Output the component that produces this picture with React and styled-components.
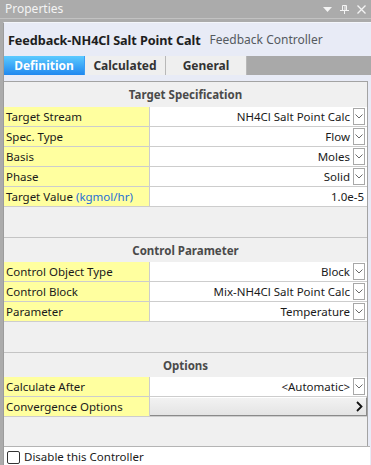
import React from "react";
import styled, { createGlobalStyle } from "styled-components";

const Global = createGlobalStyle`
  html, body { margin: 0; padding: 0; }
  body {
    background: #ababab;
    font-family: "Noto Sans", "Open Sans", sans-serif;
    width: 371px;
    height: 465px;
    overflow: hidden;
  }
  * { box-sizing: border-box; }
`;

const Window = styled.div`
  width: 371px;
  height: 465px;
  display: flex;
  flex-direction: column;
  background: #ababab;
  overflow: hidden;
`;

const TitleBar = styled.div`
  height: 19px;
  display: flex;
  align-items: center;
  padding: 0 4px 0 5px;
  color: #f4f4f4;
  font-size: 12px;
  border-bottom: 1px solid #c2c2c2;
  flex-shrink: 0;
`;

const TitleText = styled.span`
  flex: 1;
  line-height: 18px;
`;

const TitleIcons = styled.div`
  display: flex;
  align-items: center;
  gap: 8px;
  padding-right: 1px;
`;

const Panel = styled.div`
  margin: 3px 0 0 3px;
  flex: 1;
  display: flex;
  flex-direction: column;
  background: #e8ebf6;
  border-left: 1px solid #9c9c9c;
  border-top: 1px solid #f4f6fb;
  min-height: 0;
`;

const Header = styled.div`
  height: 33px;
  display: flex;
  align-items: center;
  padding-left: 4px;
  gap: 9px;
  flex-shrink: 0;
`;

const HeaderTitle = styled.span`
  font-weight: 700;
  font-size: 12.7px;
  color: #1e1e1e;
  letter-spacing: -0.1px;
`;

const HeaderSub = styled.span`
  font-size: 12px;
  color: #555a60;
`;

const TabBar = styled.div`
  height: 19px;
  display: flex;
  background: #a9a9a9;
  flex-shrink: 0;
`;

const Tab = styled.div`
  width: 81px;
  display: flex;
  align-items: center;
  justify-content: center;
  font-weight: 700;
  font-size: 12px;
  color: ${(p) => (p.$active ? "#ffffff" : "#333333")};
  background: ${(p) =>
    p.$active ? "linear-gradient(#5ccaff, #2088ef)" : "#efefef"};
  border-right: 1px solid ${(p) => (p.$active ? "#3a9df5" : "#b8b8b8")};
`;

const Spacer = styled.div`
  height: 6px;
  flex-shrink: 0;
`;

const Frame = styled.div`
  flex: 1;
  margin-right: 3px;
  background: #f0f0f0;
  border-top: 1px solid #a3a3a3;
  border-right: 1px solid #a3a3a3;
  display: flex;
  flex-direction: column;
  min-height: 0;
`;

const Section = styled.div`
  border-top: ${(p) => (p.$first ? "none" : "1px solid #c4c4c4")};
  padding-bottom: ${(p) => p.$gap}px;
  flex-shrink: 0;
`;

const SectionTitle = styled.div`
  height: ${(p) => (p.$first ? 25 : 24)}px;
  display: flex;
  align-items: center;
  justify-content: center;
  font-weight: 700;
  font-size: 11.5px;
  color: #4a4a4a;
`;

const Row = styled.div`
  height: 20px;
  display: grid;
  grid-template-columns: 146px 1fr;
  border-bottom: 1px solid #cdcdcd;
  font-size: 11.5px;
  color: #1a1a1a;
`;

const Label = styled.div`
  background: #ffff9f;
  border-right: 1px solid #cdcdcd;
  display: flex;
  align-items: center;
  padding-left: 2px;
  white-space: nowrap;
`;

const Unit = styled.span`
  color: #1f6fd6;
`;

const Value = styled.div`
  background: #ffffff;
  display: flex;
  align-items: center;
  justify-content: flex-end;
  padding-right: ${(p) => (p.$plain ? "3px" : "2px")};
  gap: 3px;
  white-space: nowrap;
`;

const DropBtn = styled.div`
  width: 12px;
  height: 17px;
  border: 1px solid #a8a8a8;
  background: #ffffff;
  display: flex;
  align-items: center;
  justify-content: center;
`;

const ArrowButton = styled.div`
  background: linear-gradient(#f2f2f2, #e4e4e4);
  border-bottom: 1px solid #8a8a8a;
  border-right: 1px solid #8a8a8a;
  border-top: 1px solid #ffffff;
  display: flex;
  align-items: center;
  justify-content: flex-end;
  padding-right: 3px;
`;

const Footer = styled.div`
  flex: 1;
  background: #ffffff;
  border-top: 1px solid #b4b4b4;
  display: flex;
  align-items: flex-start;
  padding: 2px 0 0 3px;
  gap: 4px;
  font-size: 11.5px;
  color: #1a1a1a;
  margin-right: -3px;
`;

const Check = styled.span`
  width: 13px;
  height: 13px;
  border: 1px solid #333;
  border-radius: 2px;
  background: #fff;
  margin-top: 2px;
  flex-shrink: 0;
`;

const Chevron = () => (
  <svg width="8" height="5" viewBox="0 0 8 5">
    <path d="M0.5 0.5 L4 4 L7.5 0.5" fill="none" stroke="#6a6a6a" strokeWidth="1" />
  </svg>
);

const RightChevron = () => (
  <svg width="7" height="11" viewBox="0 0 7 11">
    <path d="M1 1 L5.5 5.5 L1 10" fill="none" stroke="#111" strokeWidth="1.8" />
  </svg>
);

const DropRow = ({ label, value }) => (
  <Row>
    <Label>{label}</Label>
    <Value>
      {value}
      <DropBtn>
        <Chevron />
      </DropBtn>
    </Value>
  </Row>
);

export default function App() {
  return (
    <Window>
      <Global />
      <TitleBar>
        <TitleText>Properties</TitleText>
        <TitleIcons>
          <svg width="9" height="5" viewBox="0 0 9 5">
            <path d="M0 0 H9 L4.5 5 Z" fill="#f4f4f4" />
          </svg>
          <svg width="9" height="9" viewBox="0 0 9 9">
            <path d="M2.5 0.5 H6.5 V5.5 H2.5 Z M5 0.5 V5.5" fill="none" stroke="#f4f4f4" strokeWidth="1" />
            <path d="M0 5.5 H9 M4.5 6 V9" stroke="#f4f4f4" strokeWidth="1" />
          </svg>
          <svg width="9" height="9" viewBox="0 0 9 9">
            <path d="M0.5 0.5 L8.5 8.5 M8.5 0.5 L0.5 8.5" stroke="#f4f4f4" strokeWidth="1.3" />
          </svg>
        </TitleIcons>
      </TitleBar>
      <Panel>
        <Header>
          <HeaderTitle>Feedback-NH4Cl Salt Point Calt</HeaderTitle>
          <HeaderSub>Feedback Controller</HeaderSub>
        </Header>
        <TabBar>
          <Tab $active>Definition</Tab>
          <Tab>Calculated</Tab>
          <Tab>General</Tab>
        </TabBar>
        <Spacer />
        <Frame>
          <Section $first $gap={30}>
            <SectionTitle $first>Target Specification</SectionTitle>
            <DropRow label="Target Stream" value="NH4Cl Salt Point Calc" />
            <DropRow label="Spec. Type" value="Flow" />
            <DropRow label="Basis" value="Moles" />
            <DropRow label="Phase" value="Solid" />
            <Row>
              <Label>
                Target Value&nbsp;<Unit>(kgmol/hr)</Unit>
              </Label>
              <Value $plain>1.0e-5</Value>
            </Row>
          </Section>
          <Section $gap={30}>
            <SectionTitle>Control Parameter</SectionTitle>
            <DropRow label="Control Object Type" value="Block" />
            <DropRow label="Control Block" value="Mix-NH4Cl Salt Point Calc" />
            <DropRow label="Parameter" value="Temperature" />
          </Section>
          <Section $gap={29}>
            <SectionTitle>Options</SectionTitle>
            <DropRow label="Calculate After" value="<Automatic>" />
            <Row>
              <Label>Convergence Options</Label>
              <ArrowButton>
                <RightChevron />
              </ArrowButton>
            </Row>
          </Section>
          <Footer>
            <Check />
            Disable this Controller
          </Footer>
        </Frame>
      </Panel>
    </Window>
  );
}
